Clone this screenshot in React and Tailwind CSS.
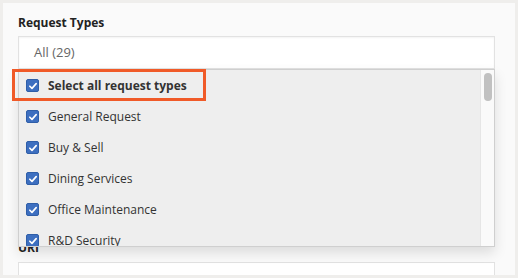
import React from "react";

const items = [
  { label: "Select all request types", bold: true },
  { label: "General Request" },
  { label: "Buy & Sell" },
  { label: "Dining Services" },
  { label: "Office Maintenance" },
  { label: "R&D Security" },
  { label: "IT Support" },
];

function Check() {
  return (
    <span className="flex h-[13px] w-[13px] shrink-0 items-center justify-center rounded-[2px] border border-[#2f5ea8] bg-[#3d6fc0]">
      <svg viewBox="0 0 12 12" className="h-[10px] w-[10px]" fill="none">
        <path d="M2.2 6.3 L4.8 8.8 L9.8 3.2" stroke="#fff" strokeWidth="2" strokeLinecap="round" strokeLinejoin="round" />
      </svg>
    </span>
  );
}

export default function App() {
  return (
    <div
      className="h-[278px] w-[518px] bg-[#efeeec] p-[3px]"
      style={{ fontFamily: '"Open Sans", "Noto Sans", sans-serif' }}
    >
      <div className="relative h-full w-full overflow-hidden bg-[#fafafa] pl-[15px] pr-[20px] pt-[12px]">
        <div className="text-[12px] font-bold leading-[16px] text-[#222]">Request Types</div>
        <div className="mt-[5px] flex h-[33px] items-center border border-[#e2e2e2] bg-white pl-[15px] text-[13px] text-[#666] shadow-[inset_0_1px_2px_rgba(0,0,0,0.05)]">
          All (29)
        </div>
        <div className="mt-[171px] text-[12px] font-bold leading-[16px] text-[#222]">URI</div>
        <div className="mt-[6px] h-[33px] border border-[#e2e2e2] bg-white" />

        {/* dropdown overlay */}
        <div className="absolute left-[15px] top-[66px] flex h-[178px] w-[477px] overflow-hidden border border-[#cfcfcf] bg-[#eeeeee] shadow-[0_6px_12px_rgba(0,0,0,0.12)]">
          <div className="flex-1">
            {items.map((it) => (
              <div key={it.label} className="flex h-[31px] items-center gap-[9px] pl-[7px]">
                <Check />
                <span
                  className={
                    "text-[12px] leading-[16px] text-[#333] " + (it.bold ? "font-bold text-[#111]" : "")
                  }
                >
                  {it.label}
                </span>
              </div>
            ))}
          </div>
          <div className="flex w-[14px] justify-center border-l border-[#e6e6e6] bg-[#fafafa] pt-[3px]">
            <div className="h-[28px] w-[8px] rounded-full bg-[#c1c1c1]" />
          </div>
        </div>

        {/* highlight */}
        <div className="absolute left-[9px] top-[66px] h-[32px] w-[194px] border-[3px] border-[#f05a28]" />
      </div>
    </div>
  );
}
